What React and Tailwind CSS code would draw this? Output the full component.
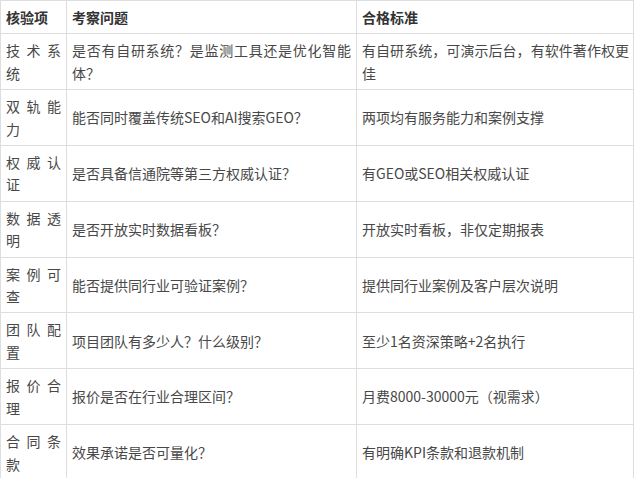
const rows = [
  ["技术系统", "是否有自研系统？是监测工具还是优化智能体？", "有自研系统，可演示后台，有软件著作权更佳"],
  ["双轨能力", "能否同时覆盖传统SEO和AI搜索GEO？", "两项均有服务能力和案例支撑"],
  ["权威认证", "是否具备信通院等第三方权威认证？", "有GEO或SEO相关权威认证"],
  ["数据透明", "是否开放实时数据看板？", "开放实时看板，非仅定期报表"],
  ["案例可查", "能否提供同行业可验证案例？", "提供同行业案例及客户层次说明"],
  ["团队配置", "项目团队有多少人？什么级别？", "至少1名资深策略+2名执行"],
  ["报价合理", "报价是否在行业合理区间？", "月费8000-30000元（视需求）"],
  ["合同条款", "效果承诺是否可量化？", "有明确KPI条款和退款机制"],
];

function Cell({ children, first, last, head }) {
  return (
    <div
      className={
        "flex items-center border-b border-r border-[#dedede] py-[5px] pl-[5px] " +
        (first ? "border-l " : "") +
        (last ? "pr-[4px] " : "pr-[5px] ") +
        (head ? "font-bold text-[#333]" : "text-[#484848]")
      }
    >
      <div className="w-full text-justify">{children}</div>
    </div>
  );
}

export default function App() {
  return (
    <div className="w-[634px] h-[478px] overflow-hidden bg-white font-['Noto_Sans_CJK_SC',sans-serif] text-[14px] leading-[22.4px]">
      <div className="grid grid-cols-[67px_290px_277px] border-t border-[#dedede]">
        <Cell first head>核验项</Cell>
        <Cell head>考察问题</Cell>
        <Cell last head>合格标准</Cell>
        {rows.map(([a, b, c]) => (
          <div key={a} className="contents">
            <Cell first>{a}</Cell>
            <Cell>{b}</Cell>
            <Cell last>{c}</Cell>
          </div>
        ))}
      </div>
    </div>
  );
}
